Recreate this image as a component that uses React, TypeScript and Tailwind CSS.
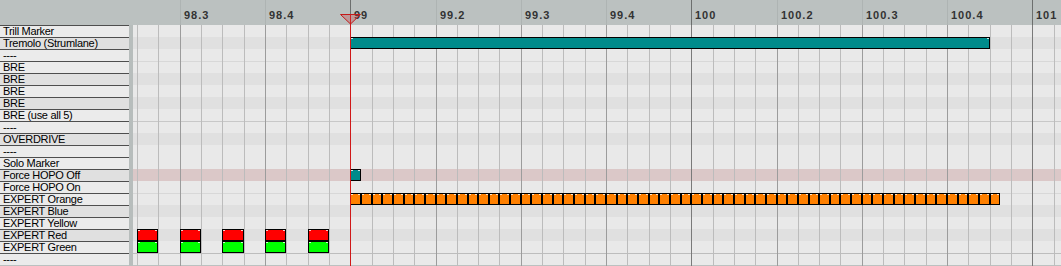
import React from 'react';

// piano roll geometry (page px)
const GRID_LEFT = 133;
const X99 = 350.3;
const PX32 = 10.656;
const ROW_H = 12;

interface Row {
  name: string;
  dark?: boolean;
  selected?: boolean;
}

const rows: Row[] = [
  { name: 'Trill Marker' },
  { name: 'Tremolo (Strumlane)', dark: true },
  { name: '----' },
  { name: 'BRE' },
  { name: 'BRE', dark: true },
  { name: 'BRE' },
  { name: 'BRE', dark: true },
  { name: 'BRE (use all 5)' },
  { name: '----' },
  { name: 'OVERDRIVE', dark: true },
  { name: '----' },
  { name: 'Solo Marker' },
  { name: 'Force HOPO Off', dark: true, selected: true },
  { name: 'Force HOPO On' },
  { name: 'EXPERT Orange' },
  { name: 'EXPERT Blue', dark: true },
  { name: 'EXPERT Yellow' },
  { name: 'EXPERT Red', dark: true },
  { name: 'EXPERT Green' },
  { name: '----' },
];

interface Note {
  row: number;
  t: number;
  dur: number;
  color: string;
}

const notes: Note[] = [
  { row: 1, t: 0, dur: 60, color: 'bg-[#008b8b]' },
  { row: 12, t: 0, dur: 1, color: 'bg-[#008b8b]' },
  ...Array.from({ length: 61 }, (_, i) => ({ row: 14, t: i, dur: 1, color: 'bg-[#ff8000]' })),
  ...[-20, -16, -12, -8, -4].flatMap((t) => [
    { row: 17, t, dur: 2, color: 'bg-[#ff0000]' },
    { row: 18, t, dur: 2, color: 'bg-[#00ff00]' },
  ]),
];

// 16th-note lines, k relative to measure 99
const lines = Array.from({ length: 44 }, (_, i) => i - 10);

const xOf = (t: number) => X99 + t * PX32;

const NoteBox = ({ note }: { note: Note }) => {
  const left = Math.round(xOf(note.t));
  const right = Math.round(xOf(note.t + note.dur));
  return (
    <div
      className={`absolute h-[12px] border border-black ${note.color}`}
      style={{ left: left - GRID_LEFT, width: right - left, top: note.row * ROW_H }}
    >
      <div className="absolute top-0 left-0 w-[2px] h-[1px] bg-white/80" />
      <div className="absolute top-0 right-0 w-[2px] h-[1px] bg-white/80" />
    </div>
  );
};

const Ruler = () => (
  <div className="relative flex-1 overflow-hidden">
    {lines
      .filter((k) => k % 4 === 0)
      .map((k) => {
        const x = Math.round(xOf(k * 2)) - GRID_LEFT;
        const measure = 99 + Math.floor(k / 16);
        const beat = (((k % 16) + 16) % 16) / 4 + 1;
        const label = beat === 1 ? `${measure}` : `${measure}.${beat}`;
        const isMeasure = beat === 1;
        return (
          <React.Fragment key={k}>
            <div
              className={`absolute top-0 h-full w-px ${isMeasure ? 'bg-[#6c6f6e]' : 'bg-[#aeb4b3]'}`}
              style={{ left: x }}
            />
            <span
              className="absolute top-[10px] text-[11px] leading-[11px] font-bold tracking-[1px] text-[#333]"
              style={{ left: x + 4 }}
            >
              {label}
            </span>
          </React.Fragment>
        );
      })}
  </div>
);

export default function App() {
  return (
    <div className="relative w-[1061px] h-[266px] overflow-hidden flex flex-col bg-[#bbc1c0] font-['Liberation_Sans',Arial,sans-serif]">
      {/* ruler */}
      <div className="flex h-[25px] shrink-0">
        <div className="w-[133px] shrink-0" />
        <Ruler />
      </div>

      <div className="flex flex-1 min-h-0">
        {/* note names */}
        <div className="w-[129px] shrink-0 flex flex-col">
          {rows.map((r, i) => (
            <div
              key={i}
              className={`h-[12px] shrink-0 border-t border-[#4e4e4e] pl-[3px] text-[11px] leading-[11px] tracking-[-0.3px] text-black whitespace-nowrap overflow-hidden ${
                r.dark ? 'bg-[#e0e0e0]' : 'bg-[#ebebeb]'
              }`}
            >
              {r.name}
            </div>
          ))}
        </div>
        <div className="w-[4px] shrink-0 bg-[#b7bdbc]" />

        {/* grid */}
        <div className="relative flex-1 overflow-hidden">
          <div className="flex flex-col">
            {rows.map((r, i) => (
              <div
                key={i}
                className={`h-[12px] shrink-0 ${
                  r.selected ? 'bg-[#dbc8c8]' : r.dark ? 'bg-[#e0e0e0]' : 'bg-[#e9e9e9]'
                }`}
              />
            ))}
          </div>
          <div className="absolute left-0 right-0 top-[36px] h-px bg-[#d8d8d8]" />
          <div className="absolute left-0 right-0 top-[96px] h-px bg-[#c8c8c8]" />
          <div className="absolute left-0 right-0 top-[168px] h-px bg-[#d8d8d8]" />
          <div className="absolute left-0 right-0 top-[228px] h-px bg-[#bdbdbd]" />
          {lines.map((k) => (
            <div
              key={k}
              className={`absolute top-0 h-full w-px ${
                k % 16 === 0 ? 'bg-[#7a7a7a]' : k % 4 === 0 ? 'bg-[#9c9c9c]' : 'bg-[#bcbcbc]'
              }`}
              style={{ left: Math.round(xOf(k * 2)) - GRID_LEFT }}
            />
          ))}
          {notes.map((n, i) => (
            <NoteBox key={i} note={n} />
          ))}
        </div>
      </div>

      {/* edit cursor */}
      <div className="absolute left-[350px] top-[14px] bottom-0 w-px bg-[#d01818]" />
      <svg className="absolute left-[340px] top-[14px]" width="21" height="11" viewBox="0 0 21 11">
        <polygon points="0.5,0.5 20.5,0.5 10.5,10" fill="rgba(200,60,60,0.3)" stroke="#c41a1a" strokeWidth="1" />
      </svg>
    </div>
  );
}
